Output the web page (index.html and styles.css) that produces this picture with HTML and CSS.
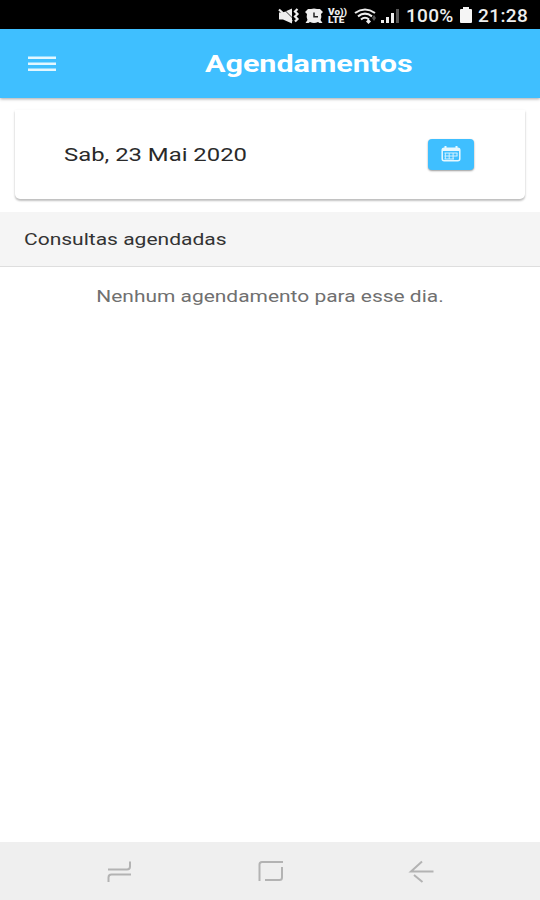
FILE: index.html
```html
<!DOCTYPE html>
<html lang="pt-BR">
<head>
    <meta charset="UTF-8">
    <meta name="viewport" content="width=device-width, initial-scale=1.0">
    <title>Agendamentos</title>
    <link rel="stylesheet" href="styles.css">
</head>
<body>
    <div class="app">
        <!-- Barra de status -->
        <div class="status-bar">
            <svg class="sound" width="23" height="18" viewBox="0 0 23 18">
                <path d="M1 5.500h4l9-4v15l-9-4H1z" fill="#eee"/>
                <path d="M5 1.500l11 11" stroke="#000" stroke-width=".8"/>
                <path d="M1 2.500l13 12" stroke="#eee" stroke-width="2.200"/>
                <path d="M19.500 2l-2.500 2.500 2.500 2.500-2.500 2.500 2.500 2.500-2.500 2.500" fill="none" stroke="#eee" stroke-width="2.200"/>
            </svg>
            <svg class="alarm" width="20" height="18" viewBox="0 0 20 18">
                <path d="M1 5l3-3h3q3-1 6 0h3l3 3-2 2q1 3-.500 6l2 3h-3l-1.500-1q-4 2-8 0L4.500 16h-3l2-3q-1.500-3-.500-6z" fill="#eee"/>
                <path d="M10 5.500v4.300h4" fill="none" stroke="#222" stroke-width="1.500"/>
            </svg>
            <div class="volte">Vo))<br>LTE</div>
            <svg class="wifi" width="24" height="18" viewBox="0 0 24 18">
                <g fill="none" stroke="#eee" stroke-width="2.100">
                    <path d="M1 6Q11-1 21 6"/>
                    <path d="M4 9.300Q11 4 18 9.300"/>
                    <path d="M7 12.500Q11 9 15 12.500"/>
                </g>
                <path d="M12 14.500l2.500-2.500 2.500 2.500-2.500 2.500z" fill="#eee"/>
                <path d="M18 11l2-3 2 3-2 3z" fill="#555"/>
            </svg>
            <svg class="signal" width="20" height="18" viewBox="0 0 20 18">
                <path d="M1 13h3v3H1zM6 10h3v6H6zM11 6h3v10h-3z" fill="#eee"/>
                <path d="M16 2h3v14h-3z" fill="#555"/>
            </svg>
            <span class="battery-level">100%</span>
            <svg class="battery" width="14" height="17" viewBox="0 0 14 17">
                <path d="M4 0h6v2h2q1 0 1 1v12q0 1-1 1H2q-1 0-1-1V3q0-1 1-1h2z" fill="#f5f5f5"/>
            </svg>
            <span class="clock">21:28</span>
        </div>

        <!-- Cabeçalho -->
        <header class="toolbar">
            <svg class="menu" width="28" height="16" viewBox="0 0 28 16">
                <path d="M0 1.700h28M0 7.700h28M0 13.700h28" stroke="#e3f7ff" stroke-width="2.400"/>
            </svg>
            <h1 class="title">Agendamentos</h1>
        </header>

        <!-- Seleção do dia -->
        <div class="card">
            <span class="date">Sab, 23 Mai 2020</span>
            <button class="calendar-button" aria-label="Escolher data">
                <svg width="20" height="16" viewBox="0 0 20 16">
                    <path d="M4.500 0v3M15.500 0v3" stroke="#e6f8ff" stroke-width="2"/>
                    <rect x="1.200" y="2.200" width="17.600" height="12.600" rx="2" fill="none" stroke="#e6f8ff" stroke-width="1.500"/>
                    <path d="M1.500 3.700h17" stroke="#e6f8ff" stroke-width="2.600"/>
                    <path d="M3.500 7h13M3.500 10h13M3.500 13h9.500M4.300 7v6M8.200 7v6M12.100 7v6M16 7v3" fill="none" stroke="#d3f1ff" stroke-width="1"/>
                </svg>
            </button>
        </div>

        <!-- Lista de consultas -->
        <div class="list-header">
            <h2 class="list-title">Consultas agendadas</h2>
        </div>
        <main class="list">
            <p class="empty">Nenhum agendamento para esse dia.</p>
        </main>

        <!-- Botões de navegação -->
        <nav class="nav-bar">
            <svg width="26" height="24" viewBox="0 0 26 24">
                <path d="M1 10.500h19q3 0 3-3V2.500M1.500 23v-4.500q0-3 3-3H24"/>
            </svg>
            <svg width="26" height="24" viewBox="0 0 26 24">
                <path d="M1.500 22V5.500q0-2.500 2.500-2.500H25M24 8v10.500q0 2.500-2.500 2.500H7"/>
            </svg>
            <svg width="26" height="24" viewBox="0 0 26 24">
                <path d="M25.500 12.500H3L14 2.500M6 16l8.500 7"/>
            </svg>
        </nav>
    </div>
</body>
</html>
```

FILE: styles.css
```css
* {
    box-sizing: border-box;
}
body {
    margin: 0;
    font-family: Roboto, sans-serif;
    background-color: #fff;
}
.app {
    display: flex;
    flex-direction: column;
    height: 900px;
    overflow: hidden;
}
.status-bar {
    display: flex;
    align-items: center;
    height: 29px;
    padding: 2px 0 0 278px;
    background-color: #000;
    color: #eee;
    font-size: 19px;
    font-weight: 500;
    flex-shrink: 0;
}
.status-bar svg {
    flex-shrink: 0;
}
.alarm {
    margin-left: 3px;
}
.volte {
    width: 20px;
    margin: 0 6px 0 4px;
    font-size: 8.5px;
    font-weight: 900;
    line-height: 8px;
    transform: scaleX(1.18);
    transform-origin: left;
}
.signal {
    margin-left: 2px;
}
.battery-level {
    width: 53px;
    margin-left: 6px;
    letter-spacing: 0.3px;
}
.battery {
    margin-right: 5px;
}
.clock {
    letter-spacing: 0.4px;
}
.toolbar {
    display: flex;
    align-items: center;
    height: 69px;
    padding: 0 28px;
    background-color: #3fbfff;
    box-shadow: 0 1px 3px rgba(0, 0, 0, 0.35);
    flex-shrink: 0;
}
.title {
    margin: 0 0 0 149px;
    color: #fff;
    font-size: 24px;
    font-weight: 700;
    transform: scaleX(1.27);
    transform-origin: left;
}
.card {
    display: flex;
    align-items: center;
    justify-content: space-between;
    height: 89px;
    margin: 12px 15px 13px;
    padding: 0 51px 1px 49px;
    border-radius: 0 0 5px 5px;
    box-shadow: 0 2px 2px rgba(0, 0, 0, 0.2), 0 1px 3px rgba(0, 0, 0, 0.1);
    flex-shrink: 0;
}
.date {
    color: #2a2a2a;
    font-size: 18px;
    transform: scaleX(1.325);
    transform-origin: left;
}
.calendar-button {
    display: flex;
    align-items: center;
    justify-content: center;
    width: 46px;
    height: 31px;
    padding: 0;
    border: none;
    border-radius: 4px;
    background-color: #3fbfff;
    box-shadow: 0 1px 2px rgba(0, 0, 0, 0.4);
}
.list-header {
    display: flex;
    align-items: center;
    height: 55px;
    padding-left: 24px;
    background-color: #f5f5f5;
    border-bottom: 1px solid #dedede;
    flex-shrink: 0;
}
.list-title {
    margin: 0;
    color: #333;
    font-size: 17px;
    font-weight: 400;
    transform: scaleX(1.236);
    transform-origin: left;
}
.list {
    flex: 1;
    text-align: center;
}
.empty {
    margin: 19px 0 0;
    color: #707070;
    font-size: 17px;
    transform: scaleX(1.232);
}
.nav-bar {
    display: flex;
    justify-content: space-between;
    align-items: center;
    height: 58px;
    padding: 0 106px 0 107px;
    background-color: #efefef;
    flex-shrink: 0;
}
.nav-bar path {
    fill: none;
    stroke: #b3b3b3;
    stroke-width: 2;
}
```
